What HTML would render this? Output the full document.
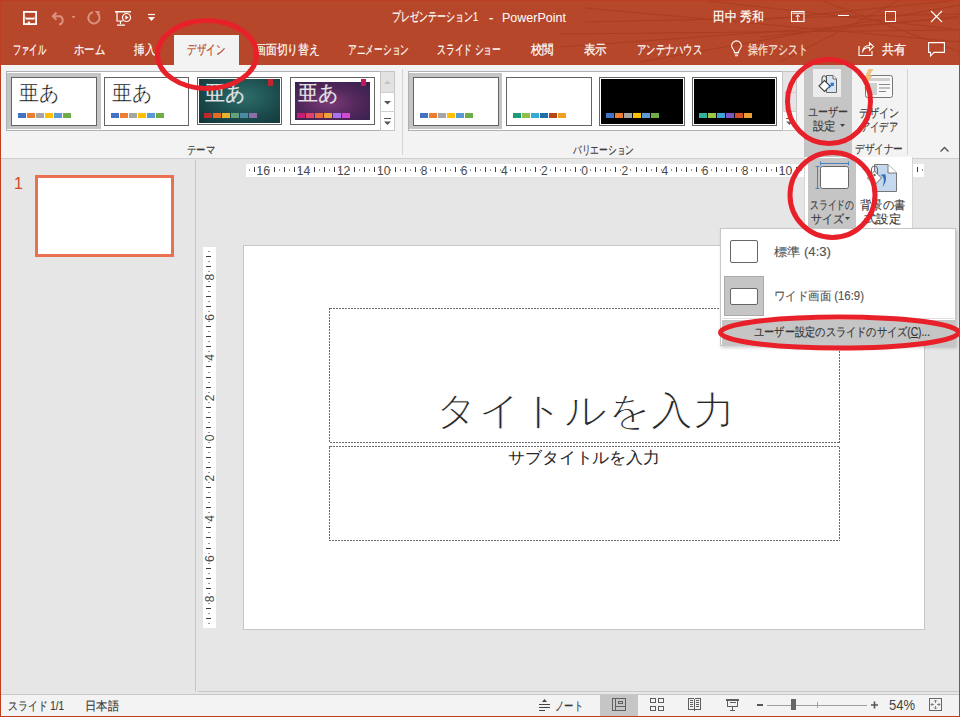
<!DOCTYPE html>
<html lang="ja"><head>
<meta charset="utf-8">
<style>
*{box-sizing:border-box;margin:0;padding:0}
html,body{width:960px;height:717px;overflow:hidden;background:#e6e6e6;font-family:"Liberation Sans",sans-serif;color:#262626}
.a{position:absolute}
svg{position:absolute;overflow:visible}
.tt{position:absolute;color:#fff;font-size:13px;white-space:nowrap;line-height:14px;-webkit-text-stroke:0.2px currentColor}
.lbl{position:absolute;font-size:12px;color:#3a3a3a;white-space:nowrap;line-height:14px;-webkit-text-stroke:0.15px currentColor}
.gal{position:absolute;background:#fff;border:1px solid #adb1b4}
.th{position:absolute;border:1px solid #646464;background:#fff}
.sqs{position:absolute;height:5px;display:flex;gap:1px}
.sqs i{display:block;width:8px;height:5px}
</style>
</head>
<body>
<!-- ===== title bar + tabs ===== -->
<div class="a" style="left:0;top:0;width:960px;height:65px;background:#b7472a"></div>
<svg style="left:0;top:0" width="960" height="65" viewBox="0 0 960 65">
 <g stroke="#9a3519" stroke-width="1" opacity="0.5" fill="none">
  <path d="M560 47 L960 18"></path><path d="M585 22 L960 14"></path><path d="M585 8 L960 42"></path>
  <path d="M700 0 L960 30"></path><path d="M760 20 L960 0"></path><path d="M820 0 L960 52"></path>
  <path d="M760 37 L960 16"></path><path d="M560 34 L960 30"></path><path d="M900 0 L780 62"></path>
  <path d="M640 62 L960 5"></path>
 </g>
</svg>
<!-- QAT -->
<svg style="left:23px;top:11px" width="14" height="14" viewBox="0 0 14 14">
 <rect x="0.9" y="0.9" width="12.2" height="12.2" fill="none" stroke="#fff" stroke-width="1.8"></rect>
 <path d="M2.5 7.6H11.5" stroke="#fff" stroke-width="1.9"></path>
 <path d="M2.5 5.8L3 6.7M11.5 5.8L11 6.7" stroke="#fff" stroke-width="0.8"></path>
 <rect x="4.8" y="10.6" width="2.2" height="2.5" fill="#fff"></rect>
</svg>
<svg style="left:51px;top:11px" width="26" height="14" viewBox="0 0 26 14">
 <path d="M5.5 1.5 L1.8 5.2 L5.5 8.9 M2 5.2 H9 A4.3 4.3 0 0 1 9 13.2 H8" fill="none" stroke="#d8927f" stroke-width="2"></path>
 <path d="M20.5 5 L24.5 5 L22.5 7.5Z" fill="#d8927f"></path>
</svg>
<svg style="left:87px;top:11px" width="14" height="14" viewBox="0 0 14 14">
 <path d="M10.5 2.5 A5.6 5.6 0 1 1 6 1.3" fill="none" stroke="#d8927f" stroke-width="2"></path>
 <path d="M7.5 0 H12.5 V5Z" fill="#d8927f"></path>
</svg>
<svg style="left:115px;top:11px" width="17" height="15" viewBox="0 0 17 15">
 <path d="M0 0.75H16" stroke="#fff" stroke-width="1.5"></path>
 <path d="M2 1V10H8" fill="none" stroke="#fff" stroke-width="1.2"></path>
 <circle cx="11.5" cy="6.5" r="4" fill="none" stroke="#fff" stroke-width="1.2"></circle>
 <path d="M10.3 4.3V8.7L13.5 6.5Z" fill="#fff"></path>
 <path d="M5.5 10V13M2 14.2H10" stroke="#fff" stroke-width="1.2"></path>
</svg>
<svg style="left:148px;top:14px" width="7" height="8" viewBox="0 0 7 8">
 <path d="M0 0.5H7" stroke="#fff" stroke-width="1.2"></path><path d="M0 3H7L3.5 7Z" fill="#fff"></path>
</svg>
<div class="tt" style="left: 392px; top: 10px; transform: scaleX(0.6922); transform-origin: 0px 0px;">プレゼンテーション1</div>
<div class="tt" style="left:489px;top:11px">-</div>
<div class="tt" style="left: 502px; top: 11px; font-size: 13px; -webkit-text-stroke: 0px; transform: scaleX(0.9626); transform-origin: 0px 0px;">PowerPoint</div>
<div class="tt" style="left: 713px; top: 10px; transform: scaleX(0.9169); transform-origin: 0px 0px;">田中 秀和</div>
<!-- window controls -->
<svg style="left:791px;top:11px" width="14" height="11" viewBox="0 0 14 11">
 <rect x="0.5" y="0.5" width="12.5" height="10" fill="none" stroke="#fff" stroke-width="1.1"></rect>
 <path d="M1.5 2.2H12" stroke="#fff" stroke-width="1"></path>
 <path d="M6.75 10.5V3.8M4.8 6L6.75 3.8L8.7 6" fill="none" stroke="#fff" stroke-width="1"></path>
</svg>
<svg style="left:838px;top:15px" width="11" height="2"><path d="M0 0.5H11" stroke="#fff"></path></svg>
<svg style="left:885px;top:11px" width="11" height="11"><rect x="0.5" y="0.5" width="10" height="10" fill="none" stroke="#fff"></rect></svg>
<svg style="left:931px;top:11px" width="11" height="11"><path d="M0 0L11 11M11 0L0 11" stroke="#fff" stroke-width="1.1"></path></svg>

<!-- tabs -->
<div class="tt" style="left: 13px; top: 43px; transform: scaleX(0.6346); transform-origin: 0px 0px;">ファイル</div>
<div class="tt" style="left: 74px; top: 43px; transform: scaleX(0.7949); transform-origin: 0px 0px;">ホーム</div>
<div class="tt" style="left: 134px; top: 43px; transform: scaleX(0.8077); transform-origin: 0px 0px;">挿入</div>
<div class="a" style="left:174px;top:35px;width:65px;height:31px;background:#f3f3f3"></div>
<div class="tt" style="left: 187px; top: 43px; color: rgb(183, 71, 42); transform: scaleX(0.7308); transform-origin: 0px 0px;">デザイン</div>
<div class="tt" style="left: 255px; top: 43px; transform: scaleX(0.8333); transform-origin: 0px 0px;">画面切り替え</div>
<div class="tt" style="left: 348px; top: 43px; transform: scaleX(0.6703); transform-origin: 0px 0px;">アニメーション</div>
<div class="tt" style="left: 437px; top: 43px; transform: scaleX(0.6764); transform-origin: 0px 0px;">スライド ショー</div>
<div class="tt" style="left: 531px; top: 43px; transform: scaleX(0.8846); transform-origin: 0px 0px;">校閲</div>
<div class="tt" style="left: 584px; top: 43px; transform: scaleX(0.8846); transform-origin: 0px 0px;">表示</div>
<div class="tt" style="left: 637px; top: 43px; transform: scaleX(0.7143); transform-origin: 0px 0px;">アンテナハウス</div>
<svg style="left:731px;top:41px" width="11" height="16" viewBox="0 0 11 16">
 <path d="M3.5 11.5 C3.5 8.5 0.6 7.5 0.6 4.8 A4.9 4.9 0 0 1 10.4 4.8 C10.4 7.5 7.5 8.5 7.5 11.5Z" fill="none" stroke="#fff" stroke-width="1.1"></path>
 <path d="M3.5 13H7.5M4 14.8H7" stroke="#fff" stroke-width="1.1"></path>
</svg>
<div class="tt" style="left: 748px; top: 43px; color: rgb(246, 230, 225); transform: scaleX(0.7692); transform-origin: 0px 0px;">操作アシスト</div>
<svg style="left:858px;top:42px" width="17" height="15" viewBox="0 0 17 15">
 <path d="M1 4V13.5H14V9" fill="none" stroke="#fff" stroke-width="1.1"></path>
 <path d="M4.5 10.5C4.5 7 7.5 5.5 11.5 5.5V8.5L15.5 4.5L11.5 0.8V3.5C7 3.5 4.5 6.5 4.5 10.5Z" fill="none" stroke="#fff" stroke-width="1.1"></path>
</svg>
<div class="tt" style="left: 882px; top: 43px; transform: scaleX(0.9231); transform-origin: 0px 0px;">共有</div>
<svg style="left:928px;top:42px" width="17" height="15" viewBox="0 0 17 15">
 <path d="M0.6 0.6H16.4V10.4H6L2.5 14V10.4H0.6Z" fill="none" stroke="#fff" stroke-width="1.1"></path>
</svg>

<!-- ===== ribbon ===== -->
<div class="a" style="left:0;top:65px;width:960px;height:93px;background:#f3f3f3"></div>
<div class="a" style="left:0;top:158px;width:960px;height:1px;background:#cfcfcf"></div>
<!-- theme gallery -->
<div class="gal" style="left:6px;top:71px;width:389px;height:60px"></div>
<div class="a" style="left:7px;top:73px;width:94px;height:56px;background:#c5c5c5"></div>
<div class="th" style="left:11px;top:77px;width:86px;height:49px"></div>
<div class="lbl" style="left: 19px; top: 81px; font-size: 21px; line-height: 24px; color: rgb(0, 0, 0); -webkit-text-stroke: 0.4px rgb(255, 255, 255); transform: scaleX(0.9535); transform-origin: 0px 0px;">亜あ</div>
<div class="sqs" style="left:18px;top:113px"><i style="background:#4472c4"></i><i style="background:#ed7d31"></i><i style="background:#a5a5a5"></i><i style="background:#ffc000"></i><i style="background:#5b9bd5"></i><i style="background:#70ad47"></i></div>

<div class="th" style="left:104px;top:77px;width:85px;height:49px"></div>
<div class="lbl" style="left: 112px; top: 81px; font-size: 21px; line-height: 24px; color: rgb(0, 0, 0); -webkit-text-stroke: 0.4px rgb(255, 255, 255); transform: scaleX(0.9535); transform-origin: 0px 0px;">亜あ</div>
<div class="sqs" style="left:111px;top:113px"><i style="background:#4472c4"></i><i style="background:#ed7d31"></i><i style="background:#a5a5a5"></i><i style="background:#ffc000"></i><i style="background:#5b9bd5"></i><i style="background:#70ad47"></i></div>

<div class="th" style="left:197px;top:77px;width:85px;height:48px;padding:1px"><div style="width:100%;height:100%;background:radial-gradient(ellipse at 55% 40%,#2e6e6c 0%,#1c4c4d 55%,#123437 100%)"></div></div>
<div class="a" style="left:268px;top:79px;width:5px;height:7px;background:#c0272d"></div>
<div class="lbl" style="left: 205px; top: 81px; font-size: 21px; line-height: 24px; color: rgb(228, 228, 228); transform: scaleX(0.9535); transform-origin: 0px 0px;">亜あ</div>
<div class="sqs" style="left:204px;top:113px"><i style="background:#c0272d"></i><i style="background:#e36c1e"></i><i style="background:#e8b42f"></i><i style="background:#64a07e"></i><i style="background:#4d89a6"></i><i style="background:#8c6fa8"></i></div>

<div class="th" style="left:290px;top:77px;width:85px;height:48px;padding:4px"><div style="width:100%;height:100%;background:radial-gradient(ellipse at 45% 55%,#7a3a78 0%,#52285a 50%,#321f4c 100%)"></div></div>
<div class="a" style="left:361px;top:79px;width:5px;height:7px;background:#c2185b"></div>
<div class="lbl" style="left: 298px; top: 81px; font-size: 21px; line-height: 24px; color: rgb(228, 228, 228); transform: scaleX(0.9535); transform-origin: 0px 0px;">亜あ</div>
<div class="sqs" style="left:297px;top:113px"><i style="background:#c81e72"></i><i style="background:#e3426a"></i><i style="background:#ea6b3f"></i><i style="background:#eda040"></i><i style="background:#a874f2"></i><i style="background:#d448d6"></i></div>
<!-- theme scroll -->
<div class="a" style="left:380px;top:71px;width:15px;height:60px;border:1px solid #c6c6c6;background:#fff"></div>
<div class="a" style="left:381px;top:72px;width:13px;height:20px;background:#e2e2e2"></div>
<div class="a" style="left:380px;top:92px;width:15px;height:1px;background:#d0d0d0"></div>
<div class="a" style="left:380px;top:111px;width:15px;height:1px;background:#d0d0d0"></div>
<svg style="left:384px;top:80px" width="7" height="4"><path d="M0 4L3.5 0.5L7 4Z" fill="#c6c6c6"></path></svg>
<svg style="left:384px;top:101px" width="7" height="4"><path d="M0 0L7 0L3.5 3.5Z" fill="#555"></path></svg>
<svg style="left:384px;top:117px" width="7" height="9"><path d="M0 1.5H7" stroke="#555"></path><path d="M0 4.5H7L3.5 8Z" fill="#555"></path></svg>
<div class="lbl" style="left: 187px; top: 143px; transform: scaleX(0.7778); transform-origin: 0px 0px;">テーマ</div>

<div class="a" style="left:402px;top:69px;width:1px;height:86px;background:#d5d5d5"></div>

<!-- variation gallery -->
<div class="gal" style="left:408px;top:71px;width:388px;height:60px"></div>
<div class="a" style="left:409px;top:73px;width:93px;height:56px;background:#c5c5c5"></div>
<div class="th" style="left:413px;top:77px;width:86px;height:49px"></div>
<div class="sqs" style="left:420px;top:113px"><i style="background:#4472c4"></i><i style="background:#ed7d31"></i><i style="background:#a5a5a5"></i><i style="background:#ffc000"></i><i style="background:#5b9bd5"></i><i style="background:#70ad47"></i></div>
<div class="th" style="left:506px;top:77px;width:86px;height:49px"></div>
<div class="sqs" style="left:513px;top:113px"><i style="background:#1e9c78"></i><i style="background:#8dc044"></i><i style="background:#35aad2"></i><i style="background:#1f6fab"></i><i style="background:#b8461b"></i><i style="background:#f0a022"></i></div>
<div class="th" style="left:599px;top:77px;width:86px;height:49px;padding:1px"><div style="width:100%;height:100%;background:#000"></div></div>
<div class="sqs" style="left:606px;top:113px"><i style="background:#4472c4"></i><i style="background:#ed7d31"></i><i style="background:#a5a5a5"></i><i style="background:#ffc000"></i><i style="background:#5b9bd5"></i><i style="background:#70ad47"></i></div>
<div class="th" style="left:692px;top:77px;width:85px;height:49px;padding:1px"><div style="width:100%;height:100%;background:#000"></div></div>
<div class="sqs" style="left:699px;top:113px"><i style="background:#2eb39a"></i><i style="background:#9cc54a"></i><i style="background:#3ba3d8"></i><i style="background:#7e57c6"></i><i style="background:#d1502c"></i><i style="background:#e8a034"></i></div>
<div class="a" style="left:782px;top:71px;width:15px;height:60px;border:1px solid #c6c6c6;background:#fff"></div>
<div class="a" style="left:783px;top:72px;width:13px;height:39px;background:#e4e4e4"></div>
<div class="a" style="left:782px;top:92px;width:15px;height:1px;background:#d0d0d0"></div>
<div class="a" style="left:782px;top:111px;width:15px;height:1px;background:#d0d0d0"></div>
<svg style="left:786px;top:117px" width="7" height="9"><path d="M0 1.5H7" stroke="#666"></path><path d="M0 4.5H7L3.5 8Z" fill="#666"></path></svg>
<div class="lbl" style="left: 573px; top: 143px; transform: scaleX(0.7262); transform-origin: 0px 0px;">バリエーション</div>

<!-- designer group -->
<div class="a" style="left:804px;top:65px;width:48px;height:94px;background:#c5c5c5"></div>
<div class="a" style="left:813px;top:69px;width:28px;height:28px;background:#ececec"></div>
<svg style="left:818px;top:75px" width="20" height="18" viewBox="0 0 20 18">
 <path d="M8.5 0.5H15L18.5 4V17.5H8.5Z" fill="#d6e4f3" stroke="#666" stroke-width="1"></path>
 <path d="M15 0.5V4H18.5" fill="#fff" stroke="#666" stroke-width="1"></path>
 <path d="M1 11L6.5 5.5L12 11L6.5 16.5Z" fill="#fff" stroke="#444" stroke-width="1.1"></path>
 <path d="M4 8V3A2.2 2.2 0 0 1 8.4 3V8" fill="none" stroke="#444" stroke-width="1"></path>
 <path d="M10.5 13L15 8.5M12.5 8.5H15V11" fill="none" stroke="#2f72c4" stroke-width="1.6"></path>
</svg>
<div class="lbl" style="left: 808px; top: 105px; transform: scaleX(0.8333); transform-origin: 0px 0px;">ユーザー</div>
<div class="lbl" style="left: 813px; top: 119px; transform: scaleX(0.9583); transform-origin: 0px 0px;">設定</div>
<svg style="left:840px;top:124px" width="5" height="3"><path d="M0 0H5L2.5 3Z" fill="#444"></path></svg>

<svg style="left:862px;top:69px" width="32" height="30" viewBox="0 0 32 30">
 <rect x="3.5" y="6.5" width="27" height="22" rx="2" fill="#f8f8f8" stroke="#777"></rect>
 <rect x="6" y="9" width="22" height="3" fill="#cfcfcf"></rect>
 <rect x="6" y="14" width="9" height="12" fill="#cfcfcf"></rect>
 <path d="M17 15.5H28M17 19H28M17 22.5H24" stroke="#888" stroke-width="1"></path>
 <path d="M6.5 0H11.5L7.5 6.5H10.5L1.5 21L5 10H2Z" fill="#efc27a" opacity="0.95"></path>
</svg>
<div class="lbl" style="left: 859px; top: 106px; transform: scaleX(0.8333); transform-origin: 0px 0px;">デザイン</div>
<div class="lbl" style="left: 861px; top: 120px; transform: scaleX(0.7708); transform-origin: 0px 0px;">アイデア</div>
<div class="lbl" style="left: 855px; top: 142px; transform: scaleX(0.8); transform-origin: 0px 0px;">デザイナー</div>
<div class="a" style="left:907px;top:69px;width:1px;height:86px;background:#d5d5d5"></div>
<svg style="left:940px;top:146px" width="9" height="6"><path d="M0.5 5.5L4.5 1.5L8.5 5.5" fill="none" stroke="#555" stroke-width="1.4"></path></svg>

<!-- ===== left panel ===== -->
<div class="a" style="left:195px;top:160px;width:1px;height:532px;background:#c8c8c8"></div>
<div class="a" style="left:14px;top:175px;font-size:16px;line-height:18px;color:#d24726">1</div>
<div class="a" style="left:35px;top:175px;width:139px;height:82px;border:3px solid #e9714f;background:#fff"></div>

<!-- ===== rulers ===== -->
<svg style="left:246px;top:164px" width="678" height="13" viewBox="0 0 678 13"><rect width="678" height="13" fill="#fff"></rect><path d="M8.5 3V8M28.5 3V8M38.5 3V8M48.5 3V8M68.5 3V8M78.5 3V8M88.5 3V8M108.5 3V8M118.5 3V8M128.5 3V8M149.5 3V8M159.5 3V8M169.5 3V8M189.5 3V8M199.5 3V8M209.5 3V8M229.5 3V8M239.5 3V8M249.5 3V8M269.5 3V8M279.5 3V8M289.5 3V8M309.5 3V8M319.5 3V8M329.5 3V8M349.5 3V8M359.5 3V8M369.5 3V8M390.5 3V8M400.5 3V8M410.5 3V8M430.5 3V8M440.5 3V8M450.5 3V8M470.5 3V8M480.5 3V8M490.5 3V8M510.5 3V8M520.5 3V8M530.5 3V8M550.5 3V8M560.5 3V8M570.5 3V8M590.5 3V8M600.5 3V8M610.5 3V8M630.5 3V8M641.5 3V8M651.5 3V8M671.5 3V8" stroke="#3c3c3c" stroke-width="1" shape-rendering="crispEdges"></path><path d="M3.5 5V7M13.5 5V7M23.5 5V7M33.5 5V7M43.5 5V7M53.5 5V7M63.5 5V7M73.5 5V7M83.5 5V7M93.5 5V7M103.5 5V7M113.5 5V7M123.5 5V7M133.5 5V7M144.5 5V7M154.5 5V7M164.5 5V7M174.5 5V7M184.5 5V7M194.5 5V7M204.5 5V7M214.5 5V7M224.5 5V7M234.5 5V7M244.5 5V7M254.5 5V7M264.5 5V7M274.5 5V7M284.5 5V7M294.5 5V7M304.5 5V7M314.5 5V7M324.5 5V7M334.5 5V7M344.5 5V7M354.5 5V7M364.5 5V7M374.5 5V7M384.5 5V7M395.5 5V7M405.5 5V7M415.5 5V7M425.5 5V7M435.5 5V7M445.5 5V7M455.5 5V7M465.5 5V7M475.5 5V7M485.5 5V7M495.5 5V7M505.5 5V7M515.5 5V7M525.5 5V7M535.5 5V7M545.5 5V7M555.5 5V7M565.5 5V7M575.5 5V7M585.5 5V7M595.5 5V7M605.5 5V7M615.5 5V7M625.5 5V7M635.5 5V7M646.5 5V7M656.5 5V7M666.5 5V7M676.5 5V7" stroke="#999" stroke-width="1" shape-rendering="crispEdges"></path><g font-family="Liberation Sans" font-size="12" fill="#4a4a4a" text-anchor="middle"><text x="17.3" y="11.2">16</text><text x="57.5" y="11.2">14</text><text x="97.6" y="11.2">12</text><text x="137.8" y="11.2">10</text><text x="178.0" y="11.2">8</text><text x="218.1" y="11.2">6</text><text x="258.3" y="11.2">4</text><text x="298.4" y="11.2">2</text><text x="338.6" y="11.2">0</text><text x="378.8" y="11.2">2</text><text x="418.9" y="11.2">4</text><text x="459.1" y="11.2">6</text><text x="499.2" y="11.2">8</text><text x="539.4" y="11.2">10</text><text x="579.6" y="11.2">12</text><text x="619.7" y="11.2">14</text><text x="659.9" y="11.2">16</text></g></svg>
<svg style="left:203px;top:247px" width="13" height="381" viewBox="0 0 13 381"><rect width="13" height="381" fill="#fff"></rect><path d="M3 9.5H8M3 19.5H8M3 39.5H8M3 49.5H8M3 59.5H8M3 79.5H8M3 89.5H8M3 99.5H8M3 119.5H8M3 130.5H8M3 140.5H8M3 160.5H8M3 170.5H8M3 180.5H8M3 200.5H8M3 210.5H8M3 220.5H8M3 240.5H8M3 250.5H8M3 260.5H8M3 280.5H8M3 290.5H8M3 301.5H8M3 321.5H8M3 331.5H8M3 341.5H8M3 361.5H8M3 371.5H8" stroke="#3c3c3c" stroke-width="1" shape-rendering="crispEdges"></path><path d="M5 4.5H7M5 14.5H7M5 24.5H7M5 34.5H7M5 44.5H7M5 54.5H7M5 64.5H7M5 74.5H7M5 84.5H7M5 94.5H7M5 104.5H7M5 114.5H7M5 125.5H7M5 135.5H7M5 145.5H7M5 155.5H7M5 165.5H7M5 175.5H7M5 185.5H7M5 195.5H7M5 205.5H7M5 215.5H7M5 225.5H7M5 235.5H7M5 245.5H7M5 255.5H7M5 265.5H7M5 275.5H7M5 285.5H7M5 296.5H7M5 306.5H7M5 316.5H7M5 326.5H7M5 336.5H7M5 346.5H7M5 356.5H7M5 366.5H7M5 376.5H7" stroke="#999" stroke-width="1" shape-rendering="crispEdges"></path><g font-family="Liberation Sans" font-size="12" fill="#4a4a4a" text-anchor="middle"><text transform="translate(11.2 30.1) rotate(-90)" x="0" y="0">8</text><text transform="translate(11.2 70.3) rotate(-90)" x="0" y="0">6</text><text transform="translate(11.2 110.5) rotate(-90)" x="0" y="0">4</text><text transform="translate(11.2 150.8) rotate(-90)" x="0" y="0">2</text><text transform="translate(11.2 191.0) rotate(-90)" x="0" y="0">0</text><text transform="translate(11.2 231.2) rotate(-90)" x="0" y="0">2</text><text transform="translate(11.2 271.5) rotate(-90)" x="0" y="0">4</text><text transform="translate(11.2 311.7) rotate(-90)" x="0" y="0">6</text><text transform="translate(11.2 351.9) rotate(-90)" x="0" y="0">8</text></g></svg>

<!-- ===== slide ===== -->
<div class="a" style="left:243px;top:245px;width:682px;height:385px;background:#fff;border:1px solid #c6c6c6"></div>
<svg style="left:0;top:0" width="960" height="717"><g fill="none" stroke="#6a6a6a" stroke-width="1" stroke-dasharray="2 1" shape-rendering="crispEdges"><rect x="329.5" y="308.5" width="510" height="134"></rect><rect x="329.5" y="446.5" width="510" height="94"></rect></g></svg>
<div class="a" style="left: 435px; top: 386px; font-size: 39px; line-height: 50px; color: rgb(38, 38, 38); white-space: nowrap; -webkit-text-stroke: 1px rgb(255, 255, 255); transform: scaleX(1.0791); transform-origin: 0px 0px;">タイトルを入力</div>
<div class="a" style="left: 508px; top: 448px; font-size: 16px; line-height: 20px; color: rgb(38, 38, 38); white-space: nowrap; transform: scaleX(1.0556); transform-origin: 0px 0px;">サブタイトルを入力</div>

<!-- ===== status bar ===== -->
<div class="a" style="left:198px;top:691px;width:762px;height:1px;background:#c8c8c8"></div>
<div class="a" style="left:0;top:694px;width:960px;height:1px;background:#c8c8c8"></div>
<div class="a" style="left:0;top:695px;width:960px;height:22px;background:#f3f3f3"></div>
<div class="lbl" style="left: 8px; top: 699px; transform: scaleX(0.8233); transform-origin: 0px 0px;">スライド 1/1</div>
<div class="lbl" style="left: 85px; top: 699px; transform: scaleX(0.9444); transform-origin: 0px 0px;">日本語</div>

<!-- ===== slide size popup ===== -->
<div class="a" style="left:804px;top:157px;width:109px;height:72px;background:#fff;border:1px solid #d4d4d4;border-top:none"></div>
<div class="a" style="left:808px;top:158px;width:48px;height:70px;background:#c5c5c5"></div>
<svg style="left:815px;top:160px" width="36" height="32" viewBox="0 0 36 32">
 <rect x="5.5" y="6.5" width="28" height="22" rx="2" fill="#fff" stroke="#666"></rect>
 <path d="M5.5 3.5H33.5M5.5 1.5V5.5M33.5 1.5V5.5" stroke="#4a7fc1" stroke-width="1"></path>
 <path d="M2.5 6.5V28.5M0.5 6.5H4.5M0.5 28.5H4.5" stroke="#4a7fc1" stroke-width="1"></path>
</svg>
<div class="lbl" style="left: 810px; top: 198px; transform: scaleX(0.7333); transform-origin: 0px 0px;">スライドの</div>
<div class="lbl" style="left: 811px; top: 212px; transform: scaleX(0.9167); transform-origin: 0px 0px;">サイズ</div>
<svg style="left:845px;top:217px" width="5" height="3"><path d="M0 0H5L2.5 3Z" fill="#444"></path></svg>
<svg style="left:866px;top:163px" width="32" height="30" viewBox="0 0 32 30">
 <path d="M8.5 1.5H22L30.5 10V28.5H8.5Z" fill="#c5d8ee" stroke="#777" stroke-width="1"></path>
 <path d="M22 1.5V10H30.5" fill="#fff" stroke="#777" stroke-width="1"></path>
 <path d="M1.5 15L8.5 8L15.5 15L8.5 22Z" fill="#fff" stroke="#666" stroke-width="1"></path>
 <path d="M5.5 11V6A3 3 0 0 1 11.5 6V11" fill="none" stroke="#666" stroke-width="1"></path>
 <circle cx="8.5" cy="12" r="1.2" fill="#666"></circle>
 <path d="M14 12C18 13 19 17 16.5 24C20 20 21 15 19 11Z" fill="#3572b8"></path>
</svg>
<div class="lbl" style="left: 860px; top: 198px; transform: scaleX(0.9375); transform-origin: 0px 0px;">背景の書</div>
<div class="lbl" style="left: 864px; top: 212px; transform: scaleX(1.0278); transform-origin: 0px 0px;">式設定</div>

<!-- ===== size menu ===== -->
<div class="a" style="left:720px;top:228px;width:236px;height:118px;background:#fff;border:1px solid #c6c6c6;box-shadow:1px 2px 3px rgba(0,0,0,0.18)"></div>
<div class="a" style="left:730px;top:240px;width:28px;height:23px;border:1px solid #666;border-radius:2px;background:#fff"></div>
<div class="lbl" style="left: 774px; top: 245px; color: rgb(85, 85, 85); transform: scaleX(1.0958); transform-origin: 0px 0px;">標準 (4:3)</div>
<div class="a" style="left:724px;top:276px;width:40px;height:40px;background:#c5c5c5;border:1px solid #aaa"></div>
<div class="a" style="left:730px;top:288px;width:28px;height:17px;border:1px solid #666;border-radius:2px;background:#fff"></div>
<div class="lbl" style="left: 774px; top: 289px; color: rgb(85, 85, 85); transform: scaleX(0.9505); transform-origin: 0px 0px;">ワイド画面 (16:9)</div>
<div class="a" style="left:722px;top:318px;width:232px;height:1px;background:#e0e0e0"></div>
<div class="a" style="left:722px;top:320px;width:233px;height:25px;background:#c5c5c5"></div>
<div class="lbl" style="left: 754px; top: 325px; color: rgb(51, 51, 51); transform: scaleX(0.8516); transform-origin: 0px 0px;">ユーザー設定のスライドのサイズ(<u>C</u>)...</div>

<!-- ===== status icons ===== -->
<svg style="left:538px;top:698px" width="13" height="14" viewBox="0 0 13 14">
 <path d="M4 4H9L6.5 1Z" fill="#444"></path>
 <path d="M0.5 6.5H12M0.5 9.5H12M0.5 12.5H7" stroke="#444" stroke-width="1" shape-rendering="crispEdges"></path>
</svg>
<div class="lbl" style="left: 555px; top: 699px; transform: scaleX(0.7778); transform-origin: 0px 0px;">ノート</div>
<div class="a" style="left:600px;top:695px;width:38px;height:21px;background:#c5c5c5"></div>
<svg style="left:612px;top:698px" width="15" height="14" viewBox="0 0 15 14">
 <g fill="none" stroke="#5f5f5f" stroke-width="1" shape-rendering="crispEdges">
 <rect x="0.5" y="0.5" width="13" height="12"></rect>
 <path d="M3.5 0.5V12.5M3.5 8.5H13.5"></path>
 <rect x="6.5" y="3.5" width="4" height="2"></rect>
 </g>
</svg>
<svg style="left:650px;top:698px" width="15" height="14" viewBox="0 0 15 14">
 <g fill="none" stroke="#5f5f5f" stroke-width="1" shape-rendering="crispEdges">
 <rect x="0.5" y="0.5" width="5" height="4"></rect><rect x="8.5" y="0.5" width="5" height="4"></rect>
 <rect x="0.5" y="8.5" width="5" height="4"></rect><rect x="8.5" y="8.5" width="5" height="4"></rect>
 </g>
</svg>
<svg style="left:688px;top:698px" width="14" height="14" viewBox="0 0 14 14">
 <g fill="none" stroke="#5f5f5f" stroke-width="1" shape-rendering="crispEdges">
 <path d="M0.5 0.5H5.5L6.5 1.5L7.5 0.5H12.5V11.5H7.5L6.5 12.5L5.5 11.5H0.5Z"></path>
 <path d="M6.5 1.5V13M2 2.5H5M2 4.5H5M2 6.5H5M2 8.5H5M8 2.5H11M8 4.5H11M8 6.5H11M8 8.5H11"></path>
 </g>
</svg>
<svg style="left:726px;top:698px" width="14" height="14" viewBox="0 0 14 14">
 <g fill="none" stroke="#5f5f5f" stroke-width="1" shape-rendering="crispEdges">
 <path d="M0 1.5H13" stroke-width="2"></path>
 <path d="M1.5 1.5V8.5H11.5V1.5"></path>
 <path d="M3.5 4.5H9.5M6.5 8.5V12.5M4 12.5H9"></path>
 </g>
</svg>
<div class="a" style="left:757px;top:704px;width:6px;height:2px;background:#555"></div>
<div class="a" style="left:767px;top:705px;width:100px;height:1px;background:#a0a0a0"></div>
<div class="a" style="left:817px;top:702px;width:1px;height:6px;background:#a0a0a0"></div>
<div class="a" style="left:791px;top:699px;width:5px;height:11px;background:#666"></div>
<svg style="left:871px;top:701px" width="7" height="8"><path d="M0 4H7M3.5 0.5V7.5" stroke="#555" stroke-width="1.6"></path></svg>
<div class="lbl" style="left: 889px; top: 697px; font-size: 14px; line-height: 16px; -webkit-text-stroke: 0px; color: rgb(68, 68, 68); transform: scaleX(0.9275); transform-origin: 0px 0px;">54%</div>
<svg style="left:929px;top:698px" width="13" height="13" viewBox="0 0 13 13">
 <rect x="0.5" y="0.5" width="12" height="12" fill="none" stroke="#666"></rect>
 <path d="M6.5 2V5M5 3.5L6.5 2L8 3.5M6.5 11V8M5 9.5L6.5 11L8 9.5M2 6.5H5M3.5 5L2 6.5L3.5 8M11 6.5H8M9.5 5L11 6.5L9.5 8" fill="none" stroke="#666" stroke-width="0.8"></path>
</svg>

<!-- ===== red annotations ===== -->
<svg style="left:0;top:0" width="960" height="717" viewBox="0 0 960 717">
 <g fill="none" stroke="#e8202a" stroke-width="5">
  <ellipse cx="207" cy="54.5" rx="49.5" ry="34"></ellipse>
  <ellipse cx="829" cy="101.5" rx="41.5" ry="42"></ellipse>
  <ellipse cx="832.5" cy="195" rx="42.5" ry="42.5"></ellipse>
  <ellipse cx="839.5" cy="332.5" rx="119" ry="15.5"></ellipse>
 </g>
</svg>

<!-- window border -->
<div class="a" style="left:0;top:0;width:960px;height:717px;border:1px solid #bd3f22;pointer-events:none"></div>


</body></html>
